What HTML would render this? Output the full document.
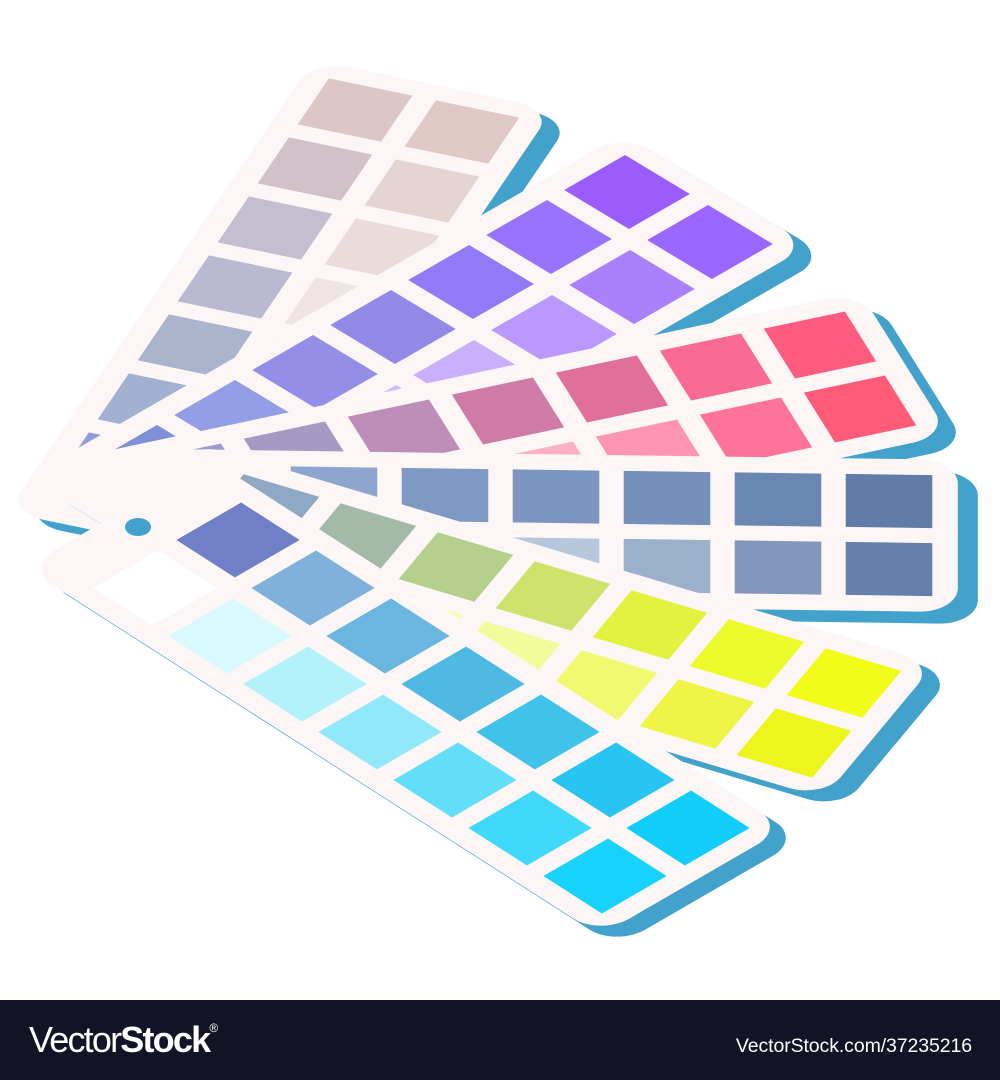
<!DOCTYPE html>
<html><head><meta charset="utf-8"><style>
html,body{margin:0;padding:0;background:#fff;}
body{width:1000px;height:1080px;position:relative;overflow:hidden;font-family:"Liberation Sans",sans-serif;}
#bar{position:absolute;left:0;top:1000px;width:1000px;height:80px;background:#121326;color:#fff;}
#logo{position:absolute;left:29px;top:1019px;font-size:36px;letter-spacing:-1.8px;color:#fff;}
#logo b{font-weight:bold;}
#logo sup{font-size:12px;vertical-align:top;position:relative;top:2px;letter-spacing:0}
#url{position:absolute;right:28px;top:1035px;font-size:19.5px;color:#fff;letter-spacing:-0.1px;}
</style></head><body>
<svg width="1000" height="1000" viewBox="0 0 1000 1000" style="position:absolute;left:0;top:0">
<defs>
<g id="strip">
<rect x="-1.05" y="-0.62" width="7.67" height="2.24" rx="0.35" ry="0.35"/>
</g>
</defs>
<!-- S1 grey -->
<g transform="translate(18,11) matrix(40 -59 107 22 115 464)" fill="#42a2cc"><use href="#strip"/></g>
<g transform="matrix(40 -59 107 22 115 464)">
<use href="#strip" fill="#fdf6f6"/>
<g>
<rect x="-0.39" y="-0.39" width="0.78" height="0.78" fill="#8f9fd6"/>
<rect x="0.61" y="-0.39" width="0.78" height="0.78" fill="#a2b0d1"/>
<rect x="1.61" y="-0.39" width="0.78" height="0.78" fill="#abb4cd"/>
<rect x="2.61" y="-0.39" width="0.78" height="0.78" fill="#b9b9cf"/>
<rect x="3.61" y="-0.39" width="0.78" height="0.78" fill="#c4bece"/>
<rect x="4.61" y="-0.39" width="0.78" height="0.78" fill="#d0c2c8"/>
<rect x="5.61" y="-0.39" width="0.78" height="0.78" fill="#dcc6c6"/>
<rect x="-0.39" y="0.61" width="0.78" height="0.78" fill="#f3eaea"/>
<rect x="0.61" y="0.61" width="0.78" height="0.78" fill="#f3eaea"/>
<rect x="1.61" y="0.61" width="0.78" height="0.78" fill="#f1e8e8"/>
<rect x="2.61" y="0.61" width="0.78" height="0.78" fill="#efe4e4"/>
<rect x="3.61" y="0.61" width="0.78" height="0.78" fill="#e9dcdb"/>
<rect x="4.61" y="0.61" width="0.78" height="0.78" fill="#e6d4d2"/>
<rect x="5.61" y="0.61" width="0.78" height="0.78" fill="#e0c8c6"/>
</g></g>
<!-- S2 purple -->
<g transform="translate(18,11) matrix(78 -45 83 50 159 462)" fill="#42a2cc"><use href="#strip"/></g>
<g transform="matrix(78 -45 83 50 159 462)">
<use href="#strip" fill="#fdf6f6"/>
<rect x="-0.39" y="-0.39" width="0.78" height="0.78" fill="#7f8fd8"/>
<rect x="0.61" y="-0.39" width="0.78" height="0.78" fill="#949ee6"/>
<rect x="1.61" y="-0.39" width="0.78" height="0.78" fill="#958ee8"/>
<rect x="2.61" y="-0.39" width="0.78" height="0.78" fill="#9389e6"/>
<rect x="3.61" y="-0.39" width="0.78" height="0.78" fill="#9279f5"/>
<rect x="4.61" y="-0.39" width="0.78" height="0.78" fill="#9873fd"/>
<rect x="5.61" y="-0.39" width="0.78" height="0.78" fill="#9a5cfd"/>
<rect x="-0.39" y="0.61" width="0.78" height="0.78" fill="#dcd0fd"/>
<rect x="0.61" y="0.61" width="0.78" height="0.78" fill="#d8c8fd"/>
<rect x="1.61" y="0.61" width="0.78" height="0.78" fill="#d0bcfd"/>
<rect x="2.61" y="0.61" width="0.78" height="0.78" fill="#c8b0fd"/>
<rect x="3.61" y="0.61" width="0.78" height="0.78" fill="#ba98fd"/>
<rect x="4.61" y="0.61" width="0.78" height="0.78" fill="#aa80fd"/>
<rect x="5.61" y="0.61" width="0.78" height="0.78" fill="#9b66fd"/>
</g>
<!-- S3 pink -->
<g transform="translate(18,11) matrix(104 -22 -40 -64 236 541)" fill="#42a2cc"><use href="#strip"/></g>
<g transform="matrix(104 -22 -40 -64 236 541)">
<use href="#strip" fill="#fdf6f6"/>
<rect x="-0.39" y="-0.39" width="0.78" height="0.78" fill="#fde0ea"/>
<rect x="0.61" y="-0.39" width="0.78" height="0.78" fill="#fdd4e2"/>
<rect x="1.61" y="-0.39" width="0.78" height="0.78" fill="#fdc0d4"/>
<rect x="2.61" y="-0.39" width="0.78" height="0.78" fill="#fdb0c8"/>
<rect x="3.61" y="-0.39" width="0.78" height="0.78" fill="#fe94b6"/>
<rect x="4.61" y="-0.39" width="0.78" height="0.78" fill="#fe7399"/>
<rect x="5.61" y="-0.39" width="0.78" height="0.78" fill="#fe5b79"/>
<rect x="-0.39" y="0.61" width="0.78" height="0.78" fill="#989fd0"/>
<rect x="0.61" y="0.61" width="0.78" height="0.78" fill="#a898c4"/>
<rect x="1.61" y="0.61" width="0.78" height="0.78" fill="#bc8eb8"/>
<rect x="2.61" y="0.61" width="0.78" height="0.78" fill="#d07aa6"/>
<rect x="3.61" y="0.61" width="0.78" height="0.78" fill="#e07099"/>
<rect x="4.61" y="0.61" width="0.78" height="0.78" fill="#f96a95"/>
<rect x="5.61" y="0.61" width="0.78" height="0.78" fill="#fe5b80"/>
</g>
<!-- S4 bluegrey -->
<g transform="translate(20,12) matrix(111 1.5 0 -68 223 560)" fill="#42a2cc"><use href="#strip"/></g>
<g transform="matrix(111 1.5 0 -68 223 560)">
<use href="#strip" fill="#fdf6f6"/>
<rect x="-0.39" y="-0.39" width="0.78" height="0.78" fill="#dfe6f0"/>
<rect x="0.61" y="-0.39" width="0.78" height="0.78" fill="#d4dcea"/>
<rect x="1.61" y="-0.39" width="0.78" height="0.78" fill="#c4d2e4"/>
<rect x="2.61" y="-0.39" width="0.78" height="0.78" fill="#b5c6dd"/>
<rect x="3.61" y="-0.39" width="0.78" height="0.78" fill="#9bb0cb"/>
<rect x="4.61" y="-0.39" width="0.78" height="0.78" fill="#8396bc"/>
<rect x="5.61" y="-0.39" width="0.78" height="0.78" fill="#6580aa"/>
<rect x="-0.39" y="0.61" width="0.78" height="0.78" fill="#97a9d6"/>
<rect x="0.61" y="0.61" width="0.78" height="0.78" fill="#8ea5cf"/>
<rect x="1.61" y="0.61" width="0.78" height="0.78" fill="#7e9ac4"/>
<rect x="2.61" y="0.61" width="0.78" height="0.78" fill="#7c94c0"/>
<rect x="3.61" y="0.61" width="0.78" height="0.78" fill="#7590bc"/>
<rect x="4.61" y="0.61" width="0.78" height="0.78" fill="#6a86b3"/>
<rect x="5.61" y="0.61" width="0.78" height="0.78" fill="#627ca9"/>
</g>
<!-- S5 yellow -->
<g transform="translate(18,11) matrix(97 29 50 -60 212 569)" fill="#42a2cc"><use href="#strip"/></g>
<g transform="matrix(97 29 50 -60 212 569)">
<use href="#strip" fill="#fdf6f6"/>
<rect x="-0.39" y="-0.39" width="0.78" height="0.78" fill="#f8fbe0"/>
<rect x="0.61" y="-0.39" width="0.78" height="0.78" fill="#f8fcd0"/>
<rect x="1.61" y="-0.39" width="0.78" height="0.78" fill="#f6fcb8"/>
<rect x="2.61" y="-0.39" width="0.78" height="0.78" fill="#f3fc9a"/>
<rect x="3.61" y="-0.39" width="0.78" height="0.78" fill="#f0fa70"/>
<rect x="4.61" y="-0.39" width="0.78" height="0.78" fill="#eef544"/>
<rect x="5.61" y="-0.39" width="0.78" height="0.78" fill="#eef51c"/>
<rect x="-0.39" y="0.61" width="0.78" height="0.78" fill="#8fa8c4"/>
<rect x="0.61" y="0.61" width="0.78" height="0.78" fill="#a3baa8"/>
<rect x="1.61" y="0.61" width="0.78" height="0.78" fill="#b5cf8c"/>
<rect x="2.61" y="0.61" width="0.78" height="0.78" fill="#cfe26c"/>
<rect x="3.61" y="0.61" width="0.78" height="0.78" fill="#e2f33f"/>
<rect x="4.61" y="0.61" width="0.78" height="0.78" fill="#eefb2a"/>
<rect x="5.61" y="0.61" width="0.78" height="0.78" fill="#f3fc18"/>
</g>
<!-- S6 cyan -->
<g transform="translate(16,11) matrix(75 48 83 -48 155 588)" fill="#42a2cc"><use href="#strip"/></g>
<g transform="matrix(75 48 83 -48 155 588)">
<use href="#strip" fill="#fdf6f6"/>
<rect x="-0.39" y="-0.39" width="0.78" height="0.78" fill="#ffffff"/>
<rect x="0.61" y="-0.39" width="0.78" height="0.78" fill="#d8fafd"/>
<rect x="1.61" y="-0.39" width="0.78" height="0.78" fill="#b3f1fb"/>
<rect x="2.61" y="-0.39" width="0.78" height="0.78" fill="#91e8fb"/>
<rect x="3.61" y="-0.39" width="0.78" height="0.78" fill="#63def9"/>
<rect x="4.61" y="-0.39" width="0.78" height="0.78" fill="#40d9fb"/>
<rect x="5.61" y="-0.39" width="0.78" height="0.78" fill="#17d2fb"/>
<rect x="-0.39" y="0.61" width="0.78" height="0.78" fill="#6f80c7"/>
<rect x="0.61" y="0.61" width="0.78" height="0.78" fill="#7eb2dc"/>
<rect x="1.61" y="0.61" width="0.78" height="0.78" fill="#69b6e0"/>
<rect x="2.61" y="0.61" width="0.78" height="0.78" fill="#4ebae3"/>
<rect x="3.61" y="0.61" width="0.78" height="0.78" fill="#3fc3ea"/>
<rect x="4.61" y="0.61" width="0.78" height="0.78" fill="#28c5f2"/>
<rect x="5.61" y="0.61" width="0.78" height="0.78" fill="#10cef9"/>
</g>
<ellipse cx="138" cy="527" rx="13" ry="9" fill="#42a2cc"/>
</svg>
<div id="bar"></div>
<div id="logo">Vector<b>Stock</b><sup>®</sup></div>
<div id="url">VectorStock.com/37235216</div>
</body></html>
